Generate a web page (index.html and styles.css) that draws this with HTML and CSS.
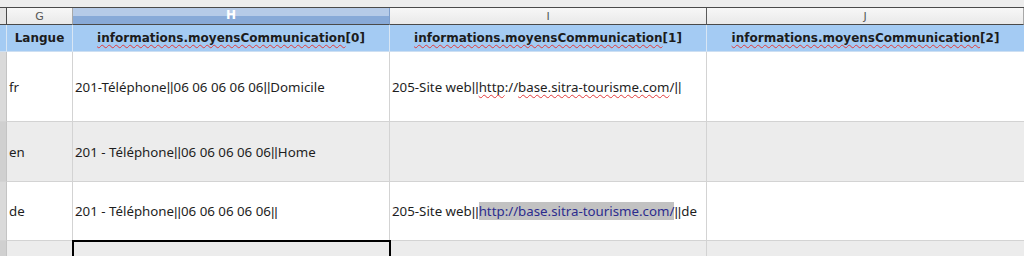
FILE: index.html
```html
<!DOCTYPE html>
<html>
<head>
<meta charset="utf-8">
<link rel="stylesheet" href="styles.css">
</head>
<body>
<div class="sheet">
  <div class="topbar"></div>

  <div class="row colhead">
    <div class="c strip"></div>
    <div class="c g">G</div>
    <div class="c h sel">H</div>
    <div class="c i">I</div>
    <div class="c j">J</div>
  </div>

  <div class="row r1">
    <div class="c strip"></div>
    <div class="c g">Langue</div>
    <div class="c h"><span class="sp">informations.moyensCommunication</span>[0]</div>
    <div class="c i"><span class="sp">informations.moyensCommunication</span>[1]</div>
    <div class="c j"><span class="sp">informations.moyensCommunication</span>[2]</div>
  </div>

  <div class="row r2">
    <div class="c strip"></div>
    <div class="c g">fr</div>
    <div class="c h">201-Téléphone<span class="p">||</span>06 06 06 06 06<span class="p">||</span>Domicile</div>
    <div class="c i">205-Site web<span class="p">||</span><span class="sp">http</span>://<span class="sp">base.sitra-tourisme.com</span>/<span class="p">||</span></div>
    <div class="c j"></div>
  </div>

  <div class="row r3">
    <div class="c strip"></div>
    <div class="c g">en</div>
    <div class="c h">201 - Téléphone<span class="p">||</span>06 06 06 06 06<span class="p">||</span>Home</div>
    <div class="c i"></div>
    <div class="c j"></div>
  </div>

  <div class="row r4">
    <div class="c strip"></div>
    <div class="c g">de</div>
    <div class="c h">201 - Téléphone<span class="p">||</span>06 06 06 06 06<span class="p">||</span></div>
    <div class="c i">205-Site web<span class="p">||</span><span class="hl">http://base.sitra-tourisme.com/</span><span class="p">||</span>de</div>
    <div class="c j"></div>
  </div>

  <div class="row r5">
    <div class="c strip"></div>
    <div class="c g"></div>
    <div class="c h cursor"></div>
    <div class="c i"></div>
    <div class="c j"></div>
  </div>
</div>
</body>
</html>
```

FILE: styles.css
```css
html, body {
  margin: 0;
  padding: 0;
  background: #ffffff;
  overflow: hidden;
}

.sheet {
  width: 1024px;
  height: 256px;
  font-family: "Noto Sans", "Open Sans", sans-serif;
  font-size: 13.3px;
  color: #1e1e1e;
}

.topbar {
  height: 7px;
  background: #ededed;
  border-bottom: 1px solid #4a4a4a;
}

.row {
  display: flex;
}

.c {
  box-sizing: border-box;
  border-right: 1px solid #d3d3d3;
  border-bottom: 1px solid #d3d3d3;
  display: flex;
  align-items: center;
  padding-left: 2px;
  white-space: pre;
  overflow: hidden;
}

.p {
  font-family: "Liberation Sans", sans-serif;
}

.strip { width: 7px; padding: 0; background: #d6d6d6; border-right-color: #c4c4c4; }
.g { width: 66px; }
.h { width: 317px; }
.i { width: 317px; }
.j { width: 317px; border-right: none; }

/* column letter header */
.colhead .c {
  height: 17px;
  justify-content: center;
  padding: 0;
  background: linear-gradient(#f7f7f7, #e9e9e9);
  color: #555555;
  font-family: "DejaVu Sans", sans-serif;
  font-size: 11px;
  border-bottom: 1px solid #4a4a4a;
  border-right: 1px solid #a8a8a8;
}
.colhead .strip { background: #e4e4e4; border-right: 1px solid #4a4a4a; }
.colhead .i { border-right: 1px solid #5a5a5a; }
.colhead .sel {
  background: linear-gradient(#b6cbe8 0, #b6cbe8 8px, #88aad8 8px, #88aad8 100%);
  color: #ffffff;
  font-weight: bold;
  font-size: 12px;
  align-items: flex-start;
  padding-top: 0;
  border-right-color: #7f9fcc;
}

/* header data row */
.r1 .c {
  height: 27px;
  background: #a4cbf3;
  justify-content: center;
  padding: 0;
  font-family: "DejaVu Sans", sans-serif;
  font-weight: bold;
  font-size: 12px;
  color: #1c1c1c;
  border-right-color: #d8e6f4;
  border-bottom-color: #cddff2;
}
.r1 .strip { background: #a4cbf3; }

.r2 .c { height: 70px; background: #ffffff; }
.r3 .c { height: 60px; background: #ececec; }
.r4 .c { height: 59px; background: #ffffff; }
.r5 .c { height: 20px; background: #ececec; }
.r2 .strip, .r4 .strip { background: #dadada; }
.r3 .strip, .r5 .strip { background: #d0d0d0; }

.sp {
  text-decoration: underline wavy #e23a3a;
  text-decoration-thickness: 1px;
  text-underline-offset: 2px;
  text-decoration-skip-ink: none;
}

.hl {
  background: #c2c2c2;
  color: #2c2c8e;
}

.cursor {
  outline: 2px solid #000000;
  outline-offset: -1px;
  position: relative;
  z-index: 1;
}
```
